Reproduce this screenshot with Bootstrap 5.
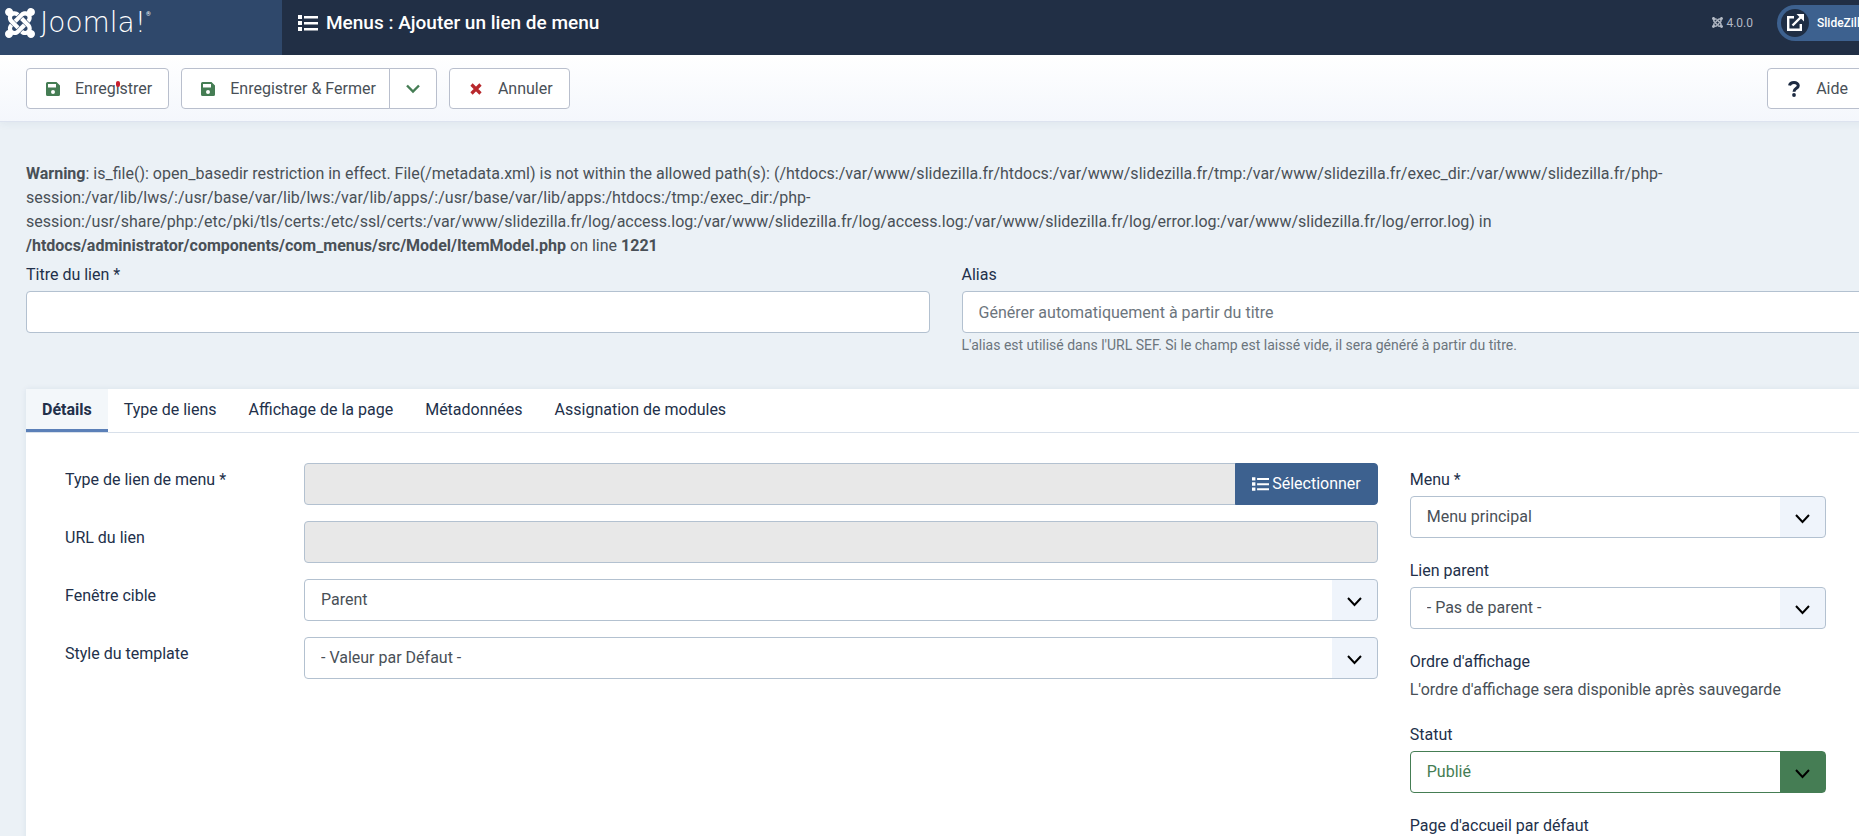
<!DOCTYPE html>
<html lang="fr">
<head>
<meta charset="utf-8">
<meta name="viewport" content="width=device-width, initial-scale=1">
<title>Menus : Ajouter un lien de menu</title>
<link href="https://cdn.jsdelivr.net/npm/bootstrap@5.3.0/dist/css/bootstrap.min.css" rel="stylesheet">
<style>
  :root { --page-over: 32px; }
  body { font-family: Roboto, "Liberation Sans", sans-serif; font-size: 16px; line-height: 24px; color: #495057; background: #ebf1f6; height: 100vh; overflow: hidden; }
  .page-wrap { width: calc(100% + var(--page-over)); min-height: 100vh; }
  .gutter-wide { --bs-gutter-x: 32px; }
  .topbar { height: 55px; background: #212f45; color: #fff; padding-bottom: 10px; }
  .brand-zone { width: 282px; height: 55px; margin-bottom: -10px; padding: 0 0 10px 5px; background: #2f486b; color: #fff; text-decoration: none; gap: 5px; }
  .brand-name { font-family: "DejaVu Sans", sans-serif; font-weight: 200; font-size: 28px; line-height: 28px; }
  .brand-reg { font-size: 6px; line-height: 10px; align-self: flex-start; }
  .topbar h1 { font-size: 19px; line-height: 24px; font-weight: 500; gap: 8px; padding-left: 16px; }
  .version-tag { font-size: 12px; line-height: 16px; color: #b3bac5; gap: 3px; }
  .site-pill { width: 114px; height: 36px; padding: 4px; gap: 8px; margin-left: 24px; border-radius: 18px; background: #3d618f; color: #fff; font-size: 12px; font-weight: 500; text-decoration: none; white-space: nowrap; }
  .pill-disc { width: 28px; height: 28px; border-radius: 50%; background: #1f2e44; flex: none; }
  .toolbar { min-height: 67px; padding: 13px 26px 12px; background: linear-gradient(#fff, #f4f7fc); border-bottom: 1px solid #dde3ef; box-shadow: 0 2px 8px rgba(30, 60, 110, .06); gap: 12px; }
  .tool-btn { --bs-btn-color: #495057; --bs-btn-bg: #fff; --bs-btn-border-color: #b9bfcd; --bs-btn-padding-x: 16px; --bs-btn-padding-y: 8px; --bs-btn-border-radius: 4px; display: flex; align-items: center; height: 41px; gap: 12px; }
  .tool-btn svg { flex: none; }
  .tool-btn-main { padding-right: 13px; }
  .pointer-dot { width: 4px; height: 6px; left: 89px; top: 12px; border-radius: 2px; background: #c8202f; }
  main { padding: 40px 26px 0; }
  label, .field-title { color: #22304a; }
  .form-control, .form-select { height: 42px; padding: 8px 16px; color: #495057; border-color: #b3c1d0; border-radius: 4px; font-size: 16px; line-height: 24px; }
  .form-control:disabled { background: #e8e8e8; }
  .form-control::placeholder { color: #6c757d; opacity: 1; }
  .form-select { background: url("data:image/svg+xml,%3Csvg xmlns='http://www.w3.org/2000/svg' width='45' height='40'%3E%3Cpath fill='%23eff4fb' d='M0 0h45v40H0z'/%3E%3Cpath d='m16 18 6.5 7 6.5-7' fill='none' stroke='%23000' stroke-width='2'/%3E%3C/svg%3E") no-repeat right top #fff; background-size: 45px 40px; }
  .form-select.is-published { border-color: #457d54; color: #457d54; background-image: url("data:image/svg+xml,%3Csvg xmlns='http://www.w3.org/2000/svg' width='45' height='40'%3E%3Cpath fill='%23457d54' d='M0 0h45v40H0z'/%3E%3Cpath d='m16 18 6.5 7 6.5-7' fill='none' stroke='%23000' stroke-width='2'/%3E%3C/svg%3E"); }
  .stack-label { display: block; margin-bottom: 4px; }
  .title-row { margin-top: 5px; margin-bottom: 32px; }
  .help-note { font-size: 14px; line-height: 24px; color: #6c757d; }
  .tab-panel { background: #fff; box-shadow: 0 0 6px rgba(30, 60, 110, .08); }
  .tab-strip { border-bottom: 1px solid #d8e0ea; }
  .tab-strip .nav-link { color: #22304a; padding: 9px 16px 8px; height: 43px; border-radius: 0; border-bottom: 3px solid transparent; }
  .tab-strip .nav-link.active { font-weight: 700; background: #f3f7fa; border-bottom-color: #5b80b8; }
  .tab-body { padding: 30px 39px; }
  .field-row { margin-bottom: 16px; }
  .field-row > label { width: 239px; flex: none; padding-top: 5px; }
  .pick-btn { --bs-btn-bg: #3d618f; --bs-btn-border-color: #3d618f; --bs-btn-color: #fff; --bs-btn-padding-x: 16px; gap: 3px; border-radius: 4px; }
  .side-col { padding-top: 5px; }
  .side-field { margin-bottom: 21px; }
</style>
</head>
<body>
<svg width="0" height="0" class="position-absolute" aria-hidden="true">
  <symbol id="i-list" viewBox="0 0 20 16"><path fill="currentColor" d="M0 0h4v4H0zM0 6h4v4H0zM0 12h4v4H0zM6 1h14v2.400H6zM6 7h14v2.400H6zM6 13h14v2.400H6z"/></symbol>
  <symbol id="i-joomla" viewBox="0 32 448 448" preserveAspectRatio="none"><path fill="currentColor" d="M.6 92.100C.6 58.800 27.400 32 60.400 32c30 0 54.500 21.900 59.200 50.200 32.600-7.600 67.100.6 96.500 30l-44.300 44.300c-20.500-20.500-42.600-16.300-55.400-3.500-14.300 14.300-14.300 37.900 0 52.200l99.500 99.500-44 44.300c-87.700-87.200-49.700-49.700-99.800-99.700-26.800-26.500-35-64.800-24.800-98.900C20.400 144.600.6 120.700.6 92.100zm129.500 116.400l44.300 44.300c10-10 89.700-89.700 99.700-99.800 14.300-14.300 37.600-14.300 51.900 0 12.800 12.800 17 35-3.500 55.400l44 44.300c31.200-31.200 38.500-67.600 28.900-101.200 29.200-4.100 51.900-29.200 51.900-59.500 0-33.200-26.800-60.100-59.800-60.100-30.300 0-55.400 22.500-59.500 51.600-33.800-9.900-71.700-1.500-98.300 25.100-18.300 19.100-71.100 71.500-99.600 99.900zm266.300 152.200c8.200-32.700-.9-68.500-26.300-93.900-11.800-12.200 5 4.700-99.500-99.700l-44.300 44.300 99.700 99.700c14.300 14.300 14.300 37.600 0 51.900-12.800 12.800-35 17-55.400-3.500l-44 44.300c27.600 30.200 68 38.800 102.700 28 5.500 27.400 29.700 48.100 58.900 48.100 33 0 59.800-26.800 59.800-60.100 0-30.200-22.500-55-51.600-59.100zm-84.300-53.100l-44-44.300c-87 86.400-50.400 50.400-99.700 99.800-14.300 14.300-37.600 14.300-51.900 0-13.100-13.400-16.900-35.300 3.200-55.400l-44-44.300c-30.200 30.200-38 65.200-29.500 98.300-26.700 6-46.200 29.900-46.200 58.200C0 453.200 26.800 480 59.800 480c28.600 0 52.500-19.800 58.600-46.700 32.700 8.200 68.500-.6 94.200-26 32.100-32 12.200-12.400 99.500-99.700z"/></symbol>
  <symbol id="i-save" viewBox="0 0 20 14"><path fill="#457d54" fill-rule="evenodd" d="M4.500 0h9L17 3.500v9a1.500 1.500 0 0 1-1.500 1.500h-11A1.500 1.500 0 0 1 3 12.500v-11A1.500 1.500 0 0 1 4.500 0zM5 2v3.500h8V2zm5 6a2 2 0 1 0 0 4 2 2 0 0 0 0-4z"/></symbol>
</svg>
<div class="page-wrap">
  <header class="topbar d-flex align-items-center">
    <a class="brand-zone d-flex align-items-center" href="#" aria-label="Joomla!">
      <svg width="30" height="30"><use href="#i-joomla"/></svg>
      <span class="d-flex"><span class="brand-name">Joomla!</span><span class="brand-reg">®</span></span>
    </a>
    <h1 class="d-flex align-items-center mb-0"><svg width="20" height="16"><use href="#i-list"/></svg>Menus : Ajouter un lien de menu</h1>
    <div class="ms-auto d-flex align-items-center">
      <span class="version-tag d-flex align-items-center"><svg width="11" height="11"><use href="#i-joomla"/></svg>4.0.0</span>
      <a class="site-pill d-flex align-items-center" href="#"><span class="pill-disc d-flex align-items-center justify-content-center"><svg width="18" height="18" viewBox="0 0 18 18" fill="none" stroke="#fff" stroke-width="2.400"><path d="M8 3.200H2.200v12.600h12.600V10"/><path d="M6.500 11.500 15 3"/><path fill="#fff" stroke="none" d="M10.500 0H18v7.500z"/></svg></span>SlideZilla</a>
    </div>
  </header>
  <div class="toolbar d-flex align-items-start">
    <button type="button" class="btn tool-btn position-relative"><svg width="20" height="14"><use href="#i-save"/></svg>Enregistrer<span class="pointer-dot position-absolute"></span></button>
    <div class="btn-group">
      <button type="button" class="btn tool-btn tool-btn-main"><svg width="20" height="14"><use href="#i-save"/></svg>Enregistrer &amp; Fermer</button>
      <button type="button" class="btn tool-btn" aria-label="Autres options"><svg width="14" height="10" viewBox="0 0 14 10" fill="none" stroke="#457d54" stroke-width="2.400"><path d="m1 1.500 6 6 6-6"/></svg></button>
    </div>
    <button type="button" class="btn tool-btn"><svg width="20" height="12" viewBox="0 0 20 12" stroke="#b8282c" stroke-width="3.200"><path d="m5.500 1.500 9 9m0-9-9 9"/></svg>Annuler</button>
    <button type="button" class="btn tool-btn ms-auto"><svg width="20" height="16" viewBox="-4 0 20 16" fill="none" stroke="#1c2a41" stroke-width="3"><path d="M1.500 4.500C2 2.500 3.800 1.500 6 1.500c2.500 0 4.300 1.200 4.300 3.200C10.300 7.500 6 7.200 6 10.800"/><circle cx="6" cy="14" r="1.900" fill="#1c2a41" stroke="none"/></svg>Aide</button>
  </div>
  <main>
    <div><b>Warning</b>: is_file(): open_basedir restriction in effect. File(/metadata.xml) is not within the allowed path(s): (/htdocs:/var/www/slidezilla.fr/htdocs:/var/www/slidezilla.fr/tmp:/var/www/slidezilla.fr/exec_dir:/var/www/slidezilla.fr/php-session:/var/lib/lws/:/usr/base/var/lib/lws:/var/lib/apps/:/usr/base/var/lib/apps:/htdocs:/tmp:/exec_dir:/php-session:/usr/share/php:/etc/pki/tls/certs:/etc/ssl/certs:/var/www/slidezilla.fr/log/access.log:/var/www/slidezilla.fr/log/access.log:/var/www/slidezilla.fr/log/error.log:/var/www/slidezilla.fr/log/error.log) in <b>/htdocs/administrator/components/com_menus/src/Model/ItemModel.php</b> on line <b>1221</b></div>
    <div class="row gutter-wide title-row">
      <div class="col-6">
        <label class="stack-label" for="f-title">Titre du lien *</label>
        <input type="text" class="form-control" id="f-title">
      </div>
      <div class="col-6">
        <label class="stack-label" for="f-alias">Alias</label>
        <input type="text" class="form-control" id="f-alias" placeholder="Générer automatiquement à partir du titre">
        <div class="help-note">L'alias est utilisé dans l'URL SEF. Si le champ est laissé vide, il sera généré à partir du titre.</div>
      </div>
    </div>
    <section class="tab-panel">
      <nav class="nav tab-strip">
        <a class="nav-link active" href="#">Détails</a>
        <a class="nav-link" href="#">Type de liens</a>
        <a class="nav-link" href="#">Affichage de la page</a>
        <a class="nav-link" href="#">Métadonnées</a>
        <a class="nav-link" href="#">Assignation de modules</a>
      </nav>
      <div class="tab-body">
        <div class="row gutter-wide">
          <div class="col-9">
            <div class="field-row d-flex">
              <label for="f-type">Type de lien de menu *</label>
              <div class="input-group"><input type="text" class="form-control" id="f-type" disabled><button type="button" class="btn pick-btn d-flex align-items-center"><svg width="17" height="14"><use href="#i-list"/></svg>Sélectionner</button></div>
            </div>
            <div class="field-row d-flex"><label for="f-url">URL du lien</label><input type="text" class="form-control" id="f-url" disabled></div>
            <div class="field-row d-flex"><label for="f-target">Fenêtre cible</label><select class="form-select" id="f-target"><option>Parent</option></select></div>
            <div class="field-row d-flex"><label for="f-style">Style du template</label><select class="form-select" id="f-style"><option>- Valeur par Défaut -</option></select></div>
          </div>
          <div class="col-3 side-col">
            <div class="side-field"><label class="stack-label" for="f-menu">Menu *</label><select class="form-select" id="f-menu"><option>Menu principal</option></select></div>
            <div class="side-field"><label class="stack-label" for="f-parent">Lien parent</label><select class="form-select" id="f-parent"><option>- Pas de parent -</option></select></div>
            <div class="side-field"><div class="field-title stack-label">Ordre d'affichage</div><div>L'ordre d'affichage sera disponible après sauvegarde</div></div>
            <div class="side-field"><label class="stack-label" for="f-state">Statut</label><select class="form-select is-published" id="f-state"><option>Publié</option></select></div>
            <div class="field-title">Page d'accueil par défaut</div>
          </div>
        </div>
      </div>
    </section>
  </main>
</div>
<script src="https://cdn.jsdelivr.net/npm/bootstrap@5.3.0/dist/js/bootstrap.bundle.min.js"></script>
</body>
</html>
